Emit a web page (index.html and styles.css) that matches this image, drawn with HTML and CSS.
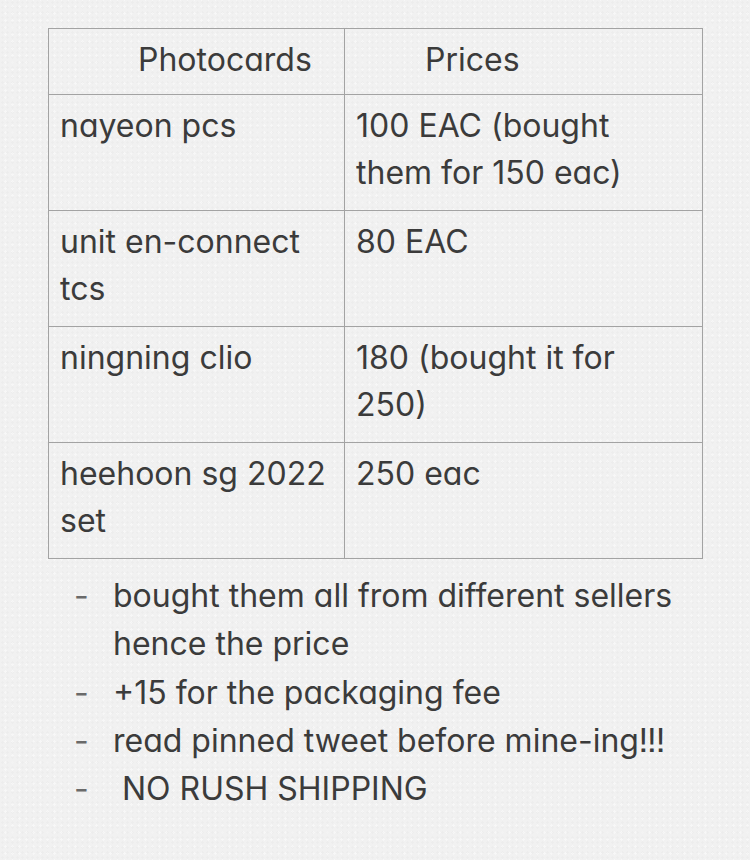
FILE: index.html
```html
<!DOCTYPE html>
<html>
<head>
<meta charset="utf-8">
<link rel="stylesheet" href="styles.css">
</head>
<body>
<div class="note">
  <table class="prices">
    <tr class="head">
      <th class="c1"><span class="h1">Photocards</span></th>
      <th class="c2"><span class="h2">Prices</span></th>
    </tr>
    <tr>
      <td class="c1">nayeon pcs</td>
      <td class="c2">100 EAC (bought them for 150 eac)</td>
    </tr>
    <tr>
      <td class="c1">unit en-connect tcs</td>
      <td class="c2">80 EAC</td>
    </tr>
    <tr>
      <td class="c1">ningning clio</td>
      <td class="c2">180 (bought it for 250)</td>
    </tr>
    <tr>
      <td class="c1">heehoon sg 2022 set</td>
      <td class="c2">250 eac</td>
    </tr>
  </table>
  <ul class="notes">
    <li><span class="dash">-</span><span class="txt">bought them all from different sellers hence the price</span></li>
    <li><span class="dash">-</span><span class="txt">+15 for the packaging fee</span></li>
    <li><span class="dash">-</span><span class="txt">read pinned tweet before mine-ing!!!</span></li>
    <li><span class="dash">-</span><span class="txt">&nbsp;NO RUSH SHIPPING</span></li>
  </ul>
</div>
</body>
</html>
```

FILE: styles.css
```css
html, body {
  margin: 0;
  padding: 0;
}
body {
  width: 750px;
  height: 860px;
  background-color: #f1f1f1;
  background-image:
    radial-gradient(rgba(0,0,0,0.015) 1px, transparent 1.3px),
    radial-gradient(rgba(255,255,255,0.45) 1px, transparent 1.3px);
  background-size: 5px 5px, 7px 7px;
  background-position: 0 0, 2px 3px;
  font-family: Inter, "Liberation Sans", sans-serif;
  font-feature-settings: "cv11" 1, "ss07" 1;
  color: #3b3b3b;
  overflow: hidden;
}
.note {
  padding: 28px 0 0 48px;
}
.prices {
  border-collapse: collapse;
  width: 654px;
  table-layout: fixed;
  font-size: 32px;
  line-height: 47px;
}
.prices th, .prices td {
  border: 1px solid #a3a3a3;
  vertical-align: top;
  text-align: left;
  font-weight: 400;
  padding: 7px 20px 0 11px;
  box-sizing: border-box;
}
.prices .c1 { width: 296px; padding-right: 4px; }
.prices .c2 { width: 358px; padding-right: 36px; }
.prices tr { height: 116px; }
.prices tr.head { height: 66px; }
.h1 { padding-left: 78px; }
.h2 { padding-left: 69px; }
.notes {
  list-style: none;
  margin: 13px 0 0 0;
  padding: 0;
  font-size: 32px;
  line-height: 48.3px;
}
.notes li {
  display: flex;
}
.dash {
  flex: 0 0 auto;
  width: 65px;
  padding-left: 26px;
  box-sizing: border-box;
  color: #6a6a6a;
}
.txt {
  flex: 0 0 auto;
  width: 580px;
}
```
